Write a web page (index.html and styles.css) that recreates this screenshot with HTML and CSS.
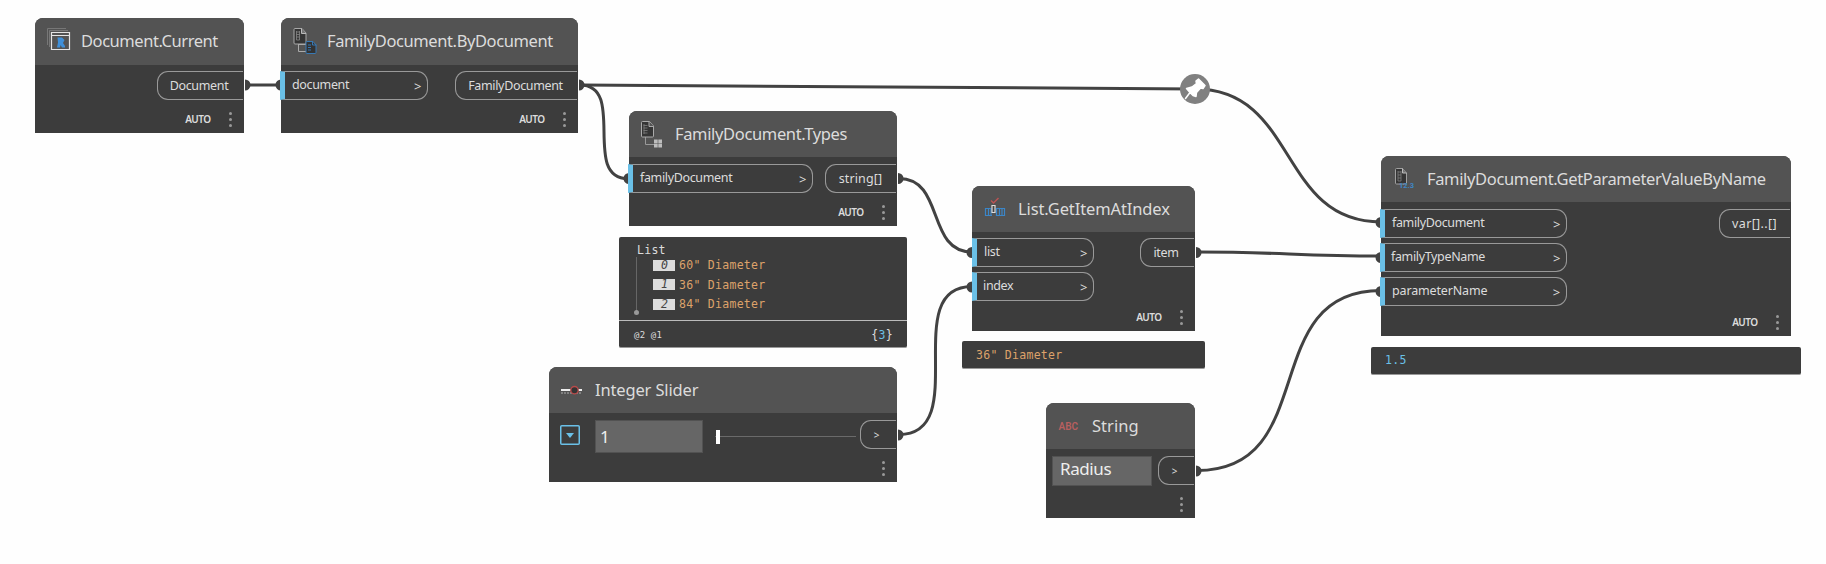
FILE: index.html
```html
<!DOCTYPE html>
<html lang="en">
<head>
<meta charset="utf-8">
<title>Node graph</title>
<link rel="stylesheet" href="styles.css">
</head>
<body>
<main class="canvas">
  <svg class="wires" width="1826" height="564" viewBox="0 0 1826 564">
    <g class="wire">
      <path d="M246 85H280"/>
      <path d="M580 85C856 85 919 89 1195 89"/>
      <path d="M580 85C627 85 581 178.500 628 178.500"/>
      <path d="M1195 89C1298 89 1278 222 1381 222"/>
      <path d="M899 178.500C945 178.500 926 252 972 252"/>
      <path d="M899 434.500C973 434.500 898 286.500 972 286.500"/>
      <path d="M1197 252C1280 252 1298 256 1381 256"/>
      <path d="M1197 470.500C1322 470.500 1256 290.500 1381 290.500"/>
    </g>
    <g class="pins">
      <path d="M245 79.500a5.500 5.500 0 0 1 0 11zM281 79.500a5.500 5.500 0 0 0 0 11zM579 79.500a5.500 5.500 0 0 1 0 11z"/>
      <path d="M629 173a5.500 5.500 0 0 0 0 11zM898 173a5.500 5.500 0 0 1 0 11zM972 247a5.500 5.500 0 0 0 0 11zM972 281.500a5.500 5.500 0 0 0 0 11z"/>
      <path d="M898 429.500a5.500 5.500 0 0 1 0 11zM1196 247a5.500 5.500 0 0 1 0 11zM1196 465.500a5.500 5.500 0 0 1 0 11z"/>
      <path d="M1381 217a5.500 5.500 0 0 0 0 11zM1381 252a5.500 5.500 0 0 0 0 11zM1381 286a5.500 5.500 0 0 0 0 11z"/>
    </g>
    <circle class="pin-disc" cx="1195" cy="89" r="15"/>
    <path class="pin-glyph" d="M1198.500 79L1205 85.500L1203 88.500L1200.500 88L1196.500 92.500L1196 96.500L1193 95.500L1190 92.500L1185.500 98.500L1190 92.500L1186.500 88.500L1192 87L1196.500 83.500L1196 81Z"/>
  </svg>

  <section class="node doc-current">
    <header class="head">
      <svg class="icon" width="26" height="28" viewBox="0 0 26 28"><path d="M3.500 20V3.500H22M1.500 18V1.500H20" fill="none" stroke="#777"/><path d="M5.500 5.500h18v17h-18zM5.500 8.500h18" fill="none" stroke="#e4e4e4" stroke-width="1.200"/><path d="M11.500 10.500h4.500l2.500 2.500-1.500 3 2 3v1.500h-3l-1.500-2.500-.5 2.500h-3l1-5z" fill="#3f8fd8"/></svg>
      <h2>Document.Current</h2>
    </header>
    <div class="ports"><div class="col"></div><div class="port out w86">Document</div></div>
    <footer class="foot"><span>AUTO</span><i class="dots"><b></b><b></b><b></b></i></footer>
  </section>

  <section class="node by-document">
    <header class="head">
      <svg class="icon" width="26" height="28" viewBox="0 0 26 28"><path d="M6.500 17v7.500H14M6.500 17.500H14" fill="none" stroke="#aaa"/><path d="M2 2.500q0-1 1-1h7l4 4.500v10q0 1-1 1H3q-1 0-1-1z" fill="#353535" stroke="#a8a8a8"/><path d="M9.500 1.500v5H14" fill="#777" stroke="#bbb"/><path d="M4.500 4v9M7.500 4v9M4.500 5h3M4.500 7.500h3M4.500 10h3M4.500 13h3" fill="none" stroke="#888" stroke-width=".8"/><path d="M14 15.500q0-1 1-1h6l3 3.500v7.500q0 1-1 1h-8q-1 0-1-1z" fill="#333" stroke="#3779b5"/><path d="M20.500 14v4h4M16 18h3M16 20.500h3M16 23h3" fill="none" stroke="#3779b5"/></svg>
      <h2>FamilyDocument.ByDocument</h2>
    </header>
    <div class="ports"><div class="col"><div class="port in w148">document<em>&gt;</em></div></div><div class="port out w122">FamilyDocument</div></div>
    <footer class="foot"><span>AUTO</span><i class="dots"><b></b><b></b><b></b></i></footer>
  </section>

  <section class="node types">
    <header class="head">
      <svg class="icon" width="26" height="28" viewBox="0 0 26 28"><path d="M5.500 17v7.500H14" fill="none" stroke="#999"/><path d="M1.500 2.500q0-1 1-1h7l4 4.500v10q0 1-1 1h-10q-1 0-1-1z" fill="#353535" stroke="#aaa"/><path d="M9 1.500v5h4.500" fill="#555" stroke="#aaa"/><path d="M3.500 5.500h4M3.500 8h4M3.500 10.500h4M3.500 13h4M4 4v10" stroke="#808080" stroke-width=".8"/><path d="M14 19.500h3.700v3.700H14zM18.300 19.500H22v3.700h-3.700zM14 23.800h3.700v3.700H14zM18.300 23.800H22v3.700h-3.700z" fill="#bdbdbd"/></svg>
      <h2>FamilyDocument.Types</h2>
    </header>
    <div class="ports"><div class="col"><div class="port in w185">familyDocument<em>&gt;</em></div></div><div class="port out w71 brackets">string[]</div></div>
    <footer class="foot"><span>AUTO</span><i class="dots"><b></b><b></b><b></b></i></footer>
  </section>

  <section class="preview list-preview">
    <div class="tree">
      <div class="root">List</div>
      <ol class="items">
        <li><span class="idx">0</span>60" Diameter</li>
        <li><span class="idx">1</span>36" Diameter</li>
        <li><span class="idx">2</span>84" Diameter</li>
      </ol>
    </div>
    <div class="summary"><span class="levels"><span>@2</span><span>@1</span></span><span class="count">{<b>3</b>}</span></div>
  </section>

  <section class="node slider">
    <header class="head">
      <svg class="icon" width="26" height="28" viewBox="0 0 26 28"><path d="M1 14h21" stroke="#eee" stroke-width="2"/><path d="M1.500 17h20" stroke="#ccc" stroke-width="1.300" stroke-dasharray="1 2"/><circle cx="14.500" cy="14.200" r="3.700" fill="#343434" stroke="#b84a4a" stroke-width="1.300"/></svg>
      <h2>Integer Slider</h2>
    </header>
    <div class="ports">
      <div class="controls">
        <svg class="toggle" width="20" height="20" viewBox="0 0 20 20"><rect x=".75" y=".75" width="18.500" height="18.500" rx="1" fill="none" stroke="#6ac0e7" stroke-width="1.500"/><path d="M6 8h8l-4 5z" fill="#6ac0e7"/></svg>
        <div class="field number">1</div>
        <div class="track"><div class="thumb"></div></div>
      </div>
      <div class="port out w36">&gt;</div>
    </div>
    <footer class="foot"><i class="dots"><b></b><b></b><b></b></i></footer>
  </section>

  <section class="node get-item">
    <header class="head">
      <svg class="icon" width="26" height="28" viewBox="0 0 26 28"><path d="M2.500 13.500H8v7H2.500zM5.500 13v8M13.500 13.500h8v7h-8zM16.500 13v8M19 13v8M8 20.500h1" fill="none" stroke="#3b86c8" stroke-width="1.200"/><path d="M9 10.500h3v7H9z" fill="#444" stroke="#ddd" stroke-width="1.200"/><path d="M8 5.500l2.500 2.500 5-5" fill="none" stroke="#b95353" stroke-width="1.500"/></svg>
      <h2>List.GetItemAtIndex</h2>
    </header>
    <div class="ports"><div class="col"><div class="port in w123">list<em>&gt;</em></div><div class="port in w123 shift">index<em>&gt;</em></div></div><div class="port out w54">item</div></div>
    <footer class="foot"><span>AUTO</span><i class="dots"><b></b><b></b><b></b></i></footer>
  </section>
  <section class="preview item-preview"><span class="string">36" Diameter</span></section>

  <section class="node string-node">
    <header class="head">
      <svg class="icon" width="26" height="28" viewBox="0 0 26 28"><text class="abc" x="1.500" y="17.500">ABC</text></svg>
      <h2>String</h2>
    </header>
    <div class="ports"><div class="controls"><div class="field text">Radius</div></div><div class="port out w36">&gt;</div></div>
    <footer class="foot"><i class="dots"><b></b><b></b><b></b></i></footer>
  </section>

  <section class="node get-param">
    <header class="head">
      <svg class="icon" width="26" height="28" viewBox="0 0 26 28"><path d="M3.500 4.500q0-1 1-1h6l4 4.500v10q0 1-1 1h-9q-1 0-1-1z" fill="#353535" stroke="#a0a0a0"/><path d="M10.500 3.500V8h4" fill="#777" stroke="#bbb"/><path d="M6 6v10M9 6v10M6 7h3M6 10h3M6 13h3M6 16h3" fill="none" stroke="#808080" stroke-width=".8"/><text class="digits" x="7" y="23">12.3</text></svg>
      <h2>FamilyDocument.GetParameterValueByName</h2>
    </header>
    <div class="ports"><div class="col"><div class="port in w187">familyDocument<em>&gt;</em></div><div class="port in w187 shift">familyTypeName<em>&gt;</em></div><div class="port in w187 wide">parameterName<em>&gt;</em></div></div><div class="port out w71 brackets wide">var[]..[]</div></div>
    <footer class="foot"><span>AUTO</span><i class="dots"><b></b><b></b><b></b></i></footer>
  </section>
  <section class="preview param-preview"><span class="num">1.5</span></section>
</main>
</body>
</html>
```

FILE: styles.css
```css
* { box-sizing: border-box; }
body { margin: 0; background: #fff; }
.canvas {
  position: relative;
  width: 1826px;
  height: 564px;
  overflow: hidden;
  background: #fefefe;
  font-family: "Noto Sans", "Open Sans", sans-serif;
}
.wires { position: absolute; left: 0; top: 0; }
.wire { fill: none; stroke: #424242; stroke-width: 3; }
.pins { fill: #424242; }
.pin-disc { fill: #808080; }
.pin-glyph { fill: #fff; stroke: #fff; stroke-width: 1.5; stroke-linejoin: round; }

.node {
  position: absolute;
  display: flex;
  flex-direction: column;
  height: 115px;
  background: #3c3c3c;
  border-radius: 8px 8px 0 0;
  color: #dcdcdc;
}
.doc-current { left: 35px; top: 18px; width: 209px; }
.by-document { left: 281px; top: 18px; width: 297px; }
.types { left: 629px; top: 111px; width: 268px; }
.slider { left: 549px; top: 367px; width: 348px; }
.get-item { left: 972px; top: 186px; width: 223px; height: 145px; }
.string-node { left: 1046px; top: 403px; width: 149px; }
.get-param { left: 1381px; top: 156px; width: 410px; height: 180px; }

.head {
  display: flex;
  flex: none;
  align-items: center;
  height: 46px;
  padding-left: 11px;
  background: #535353;
  border-radius: 8px 8px 0 0;
}
.doc-current .head, .by-document .head { height: 47px; padding-bottom: 1px; }
.icon { flex: none; }
.head h2 {
  margin: 0 0 0 9px;
  font-size: 16.5px;
  font-weight: 400;
  line-height: 24px;
  letter-spacing: -0.35px;
  white-space: nowrap;
}
.doc-current h2 { letter-spacing: -0.45px; }
.by-document h2 { letter-spacing: -0.4px; }
.get-item h2 { letter-spacing: -0.12px; }
.slider h2 { letter-spacing: -0.15px; }
.string-node h2 { letter-spacing: 0.05px; }
.ports {
  display: flex;
  justify-content: space-between;
  align-items: flex-start;
  padding: 6px 1px 0 0;
}
.types .ports, .slider .ports, .string-node .ports, .get-param .ports { padding-top: 7px; }
.col { display: flex; flex-direction: column; gap: 5px; margin-left: -1px; }
.get-item .col { margin-left: 0; }
.port {
  display: flex;
  align-items: center;
  height: 29px;
  border: 1px solid #999;
  font-size: 12.5px;
  line-height: 18px;
  letter-spacing: -0.35px;
  white-space: nowrap;
}
.in {
  justify-content: space-between;
  padding: 0 6px 2px 7px;
  border-left: 5px solid #6ac0e7;
  border-radius: 0 11px 11px 0;
}
.in em { font-style: normal; font-size: 13px; position: relative; top: 1px; }
.shift { padding-left: 6px; }
.out { justify-content: center; border-right: 0; border-radius: 11px 0 0 11px; }
.w36 { width: 36px; padding-right: 4px; font-size: 10px; }
.w54 { width: 54px; padding-right: 3px; }
.w71 { width: 71px; }
.w86 { width: 86px; padding-right: 3px; }
.w122 { width: 122px; padding-right: 2px; }
.w123 { width: 122px; }
.w148 { width: 148px; }
.w185 { width: 185px; }
.w187 { width: 187px; }
.brackets { letter-spacing: 0.15px; padding-right: 1px; }
.wide { letter-spacing: -0.15px; }
.brackets.wide { letter-spacing: 0.35px; }

.foot {
  display: flex;
  justify-content: flex-end;
  align-items: center;
  gap: 18px;
  height: 14px;
  margin: auto 12.5px 7px 0;
  font-size: 10px;
  font-weight: 600;
  letter-spacing: -0.55px;
}
.dots { display: flex; flex-direction: column; gap: 3px; }
.dots b { width: 3px; height: 3px; border-radius: 50%; background: #999; }

.controls { display: flex; align-items: flex-start; }
.toggle { margin: 5px 15px 0 11px; }
.field {
  display: flex;
  align-items: center;
  background: #666;
  border: 1px solid #525252;
  color: #eee;
  font-size: 17px;
  letter-spacing: -0.4px;
}
.number { width: 108px; height: 33px; padding-left: 4px; }
.text { width: 100px; height: 30px; margin-left: 6px; padding: 0 0 5px 7px; }
.track {
  display: flex;
  align-items: center;
  width: 141px;
  height: 15px;
  margin: 9px 0 0 12px;
  background: linear-gradient(#6a6a6a, #6a6a6a) 0 7px / 100% 1px no-repeat;
}
.thumb { width: 4px; height: 14px; margin-left: 1px; background: #fff; }

.preview {
  position: absolute;
  background: #3c3c3c;
  border-bottom: 1px solid #999;
  border-radius: 2px;
  color: #dcdcdc;
  font-family: "DejaVu Sans Mono", monospace;
  font-size: 11.5px;
  letter-spacing: 0.28px;
}
.list-preview { left: 619px; top: 237px; width: 288px; height: 111px; }
.item-preview { left: 962px; top: 341px; width: 243px; height: 28px; padding: 7px 14px; line-height: 14px; }
.param-preview { left: 1371px; top: 347px; width: 430px; height: 28px; padding: 6px 14px; line-height: 14px; }
.string, .items { color: #dda26a; }
.num { color: #6ac0e7; }
.tree { height: 84px; padding: 5px 0 0 17px; border-bottom: 1px solid #bbb; }
.root { height: 15px; line-height: 16px; padding-left: 1px; }
.items {
  position: relative;
  width: 200px;
  height: 55px;
  margin: 0;
  padding: 1px 0 0 16px;
  border-left: 1px solid #666;
  list-style: none;
}
.items::after {
  content: "";
  position: absolute;
  left: -3px;
  bottom: -3px;
  width: 5px;
  height: 5px;
  border-radius: 50%;
  background: #999;
}
.items li { display: flex; align-items: center; height: 19.5px; padding-bottom: 5px; white-space: nowrap; }
.idx {
  width: 22px;
  height: 11px;
  margin-right: 4px;
  padding-left: 8px;
  background: #dcdcdc;
  color: #444;
  font-style: italic;
  line-height: 11px;
}
.summary { display: flex; justify-content: space-between; align-items: center; height: 28px; padding: 0 14px 0 15px; }
.levels { display: flex; gap: 5px; font-size: 9px; letter-spacing: 0.4px; }
.count b { color: #6ac0e7; font-weight: 400; }
.abc { font: 600 10px Roboto, sans-serif; fill: #b85f5f; }
.digits { font: 700 7.5px Roboto, sans-serif; fill: #3f86c4; }
```
